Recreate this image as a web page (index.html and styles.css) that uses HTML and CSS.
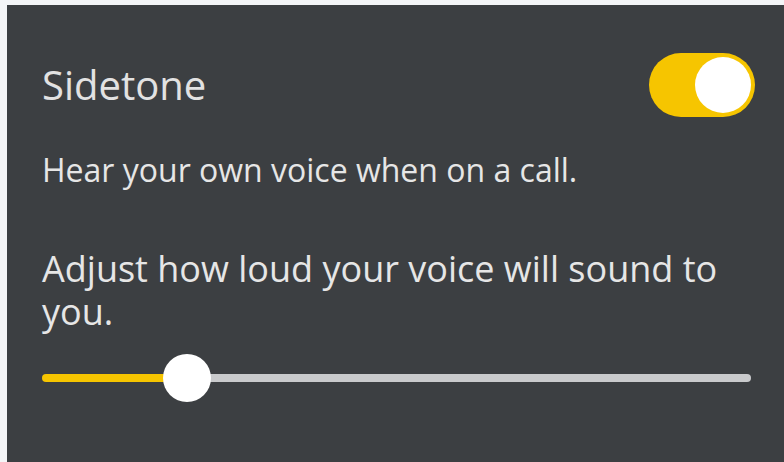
FILE: index.html
```html
<!DOCTYPE html>
<html>
<head>
<meta charset="utf-8">
<link rel="stylesheet" href="styles.css">
</head>
<body>
<div class="panel">
  <div class="header">
    <div class="title">Sidetone</div>
    <div class="toggle"><div class="knob"></div></div>
  </div>
  <div class="desc">Hear your own voice when on a call.</div>
  <div class="adjust">Adjust how loud your voice will sound to you.</div>
  <div class="slider">
    <div class="fill"></div>
    <div class="thumb"></div>
    <div class="rest"></div>
  </div>
</div>
</body>
</html>
```
FILE: styles.css
```css
html, body {
  margin: 0;
  padding: 0;
  background: #f4f5f7;
  width: 784px;
  height: 462px;
  overflow: hidden;
}
.panel {
  box-sizing: border-box;
  margin: 5px 0 0 7px;
  height: 457px;
  background: #3c3f42;
  padding: 0 33px 0 35px;
  font-family: "Open Sans", "Noto Sans", sans-serif;
  color: #e6e6e6;
  display: flex;
  flex-direction: column;
}
.header {
  display: flex;
  justify-content: space-between;
  align-items: center;
  height: 64px;
  margin-top: 48px;
}
.title {
  font-size: 40px;
  color: #e2e2e2;
  line-height: 48px;
}
.toggle {
  width: 106px;
  height: 64px;
  border-radius: 32px;
  background: #f6c500;
  box-sizing: border-box;
  padding: 4px;
  display: flex;
  justify-content: flex-end;
  margin-right: -4px;
}
.knob {
  width: 56px;
  height: 56px;
  border-radius: 50%;
  background: #ffffff;
}
.desc {
  font-size: 32px;
  line-height: 40px;
  margin-top: 33px;
}
.adjust {
  font-size: 36px;
  line-height: 43px;
  margin-top: 57px;
}
.slider {
  display: flex;
  align-items: center;
  height: 50px;
  margin-top: 20px;
}
.fill {
  width: 123px;
  height: 8px;
  background: #f6c500;
  border-radius: 4px 0 0 4px;
}
.thumb {
  width: 48px;
  height: 48px;
  border-radius: 50%;
  background: #ffffff;
  margin: 0 -2px;
  position: relative;
}
.rest {
  flex: 1;
  height: 8px;
  background: #c9cacc;
  border-radius: 0 4px 4px 0;
}
```
